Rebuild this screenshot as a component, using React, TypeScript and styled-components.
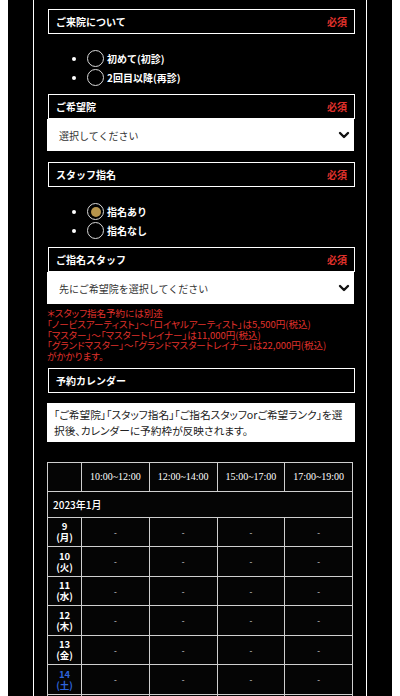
import styled, { createGlobalStyle } from 'styled-components';

const GlobalStyle = createGlobalStyle`
  html, body {
    margin: 0;
    padding: 0;
    background: #ffffff;
  }
  body {
    padding: 0 8px;
    font-family: "Noto Sans CJK JP", "Noto Sans", sans-serif;
    -webkit-font-smoothing: antialiased;
  }
  * {
    box-sizing: border-box;
  }
`;

const StyledPage = styled.div`
  background: #000000;
  padding: 0 25px;
  min-height: 696px;
`;

const StyledFrame = styled.div`
  border-left: 1px solid #ffffff;
  border-right: 1px solid #ffffff;
  padding: 9px 11px 0 13px;
  min-height: 696px;
`;

const StyledHeading = styled.div<{ $gap?: number }>`
  display: flex;
  align-items: center;
  justify-content: space-between;
  height: 25px;
  margin-left: 1px;
  padding: 0 7px;
  border: 1px solid #ffffff;
  background: #000000;
  color: #ffffff;
  font-size: 10px;
  font-weight: 700;
  margin-top: ${({ $gap }) => $gap ?? 0}px;
`;

const StyledRequired = styled.span`
  color: #e0322c;
  font-weight: 700;
`;

const StyledRadioList = styled.ul`
  list-style: none;
  margin: 15px 0 7px;
  padding: 0 0 0 25px;
`;

const StyledRadioItem = styled.li`
  display: flex;
  align-items: center;
  height: 19px;
  color: #ffffff;
  font-size: 10px;
  font-weight: 700;

  &::before {
    content: '';
    width: 4px;
    height: 4px;
    border-radius: 50%;
    background: #ffffff;
    margin-right: 11px;
  }
`;

const StyledRadioLabel = styled.label`
  display: flex;
  align-items: center;
  gap: 3px;
`;

const StyledRadio = styled.input`
  appearance: none;
  margin: 0;
  width: 17px;
  height: 17px;
  border-radius: 50%;
  border: 1.5px solid #d8d8d8;
  background: #000000;
  display: grid;
  place-items: center;

  &:checked::after {
    content: '';
    width: 10px;
    height: 10px;
    border-radius: 50%;
    background: #b7954c;
  }
`;

const StyledSelect = styled.div`
  display: flex;
  align-items: center;
  justify-content: space-between;
  width: 307px;
  height: 32px;
  padding: 0 4px 0 12px;
  background: #ffffff;
  color: #333333;
  font-size: 10px;
`;

const StyledChevron = styled.svg`
  width: 12px;
  height: 12px;
`;

const StyledNote = styled.p`
  margin: 4px 0 0;
  color: #e0322c;
  font-size: 9.5px;
  line-height: 10.8px;
  font-feature-settings: "palt";
`;

const StyledInfo = styled.p`
  margin: 10px 0 0;
  padding: 4px 6px 3px 7px;
  background: #ffffff;
  color: #222222;
  font-size: 10.7px;
  line-height: 16px;
  font-feature-settings: "palt";
`;

const StyledTable = styled.table`
  margin-top: 20px;
  width: 306px;
  border-collapse: collapse;
  table-layout: fixed;
  background: #050505;
  color: #ffffff;

  td, th {
    border: 1px solid #cfcfcf;
    padding: 0;
    text-align: center;
  }
`;

const StyledTimeHead = styled.th`
  height: 29px;
  font-family: "Liberation Serif", "Noto Sans CJK JP", serif;
  font-size: 10px;
  font-weight: 400;
`;

const StyledMonthCell = styled.td`
  height: 26px;
  && {
    text-align: left;
    padding-left: 5px;
  }
  font-size: 10px;
  font-weight: 500;
`;

const StyledDayCell = styled.td<{ $holiday?: boolean }>`
  height: 29.5px;
  font-size: 9.5px;
  font-weight: 700;
  line-height: 11px;
  color: ${({ $holiday }) => ($holiday ? '#2e63d8' : '#ffffff')};
`;

const StyledDayLine = styled.span`
  display: block;
`;

const StyledSlotCell = styled.td`
  font-size: 8px;
  color: #e8e8e8;
`;

const Chevron = () => (
  <StyledChevron viewBox="0 0 12 12">
    <polyline points="2,4 6,8 10,4" fill="none" stroke="#111" strokeWidth="2.4" strokeLinecap="round" strokeLinejoin="round" />
  </StyledChevron>
);

const slots = ['10:00~12:00', '12:00~14:00', '15:00~17:00', '17:00~19:00'];

const days = [
  { day: 9, week: '月' },
  { day: 10, week: '火' },
  { day: 11, week: '水' },
  { day: 12, week: '木' },
  { day: 13, week: '金' },
  { day: 14, week: '土', holiday: true },
  { day: 15, week: '日', holiday: true },
];

export default function App() {
  return (
    <>
      <GlobalStyle />
      <StyledPage>
        <StyledFrame>
          <StyledHeading>
            ご来院について
            <StyledRequired>必須</StyledRequired>
          </StyledHeading>
          <StyledRadioList>
            <StyledRadioItem>
              <StyledRadioLabel>
                <StyledRadio type="radio" name="visit" />
                初めて(初診)
              </StyledRadioLabel>
            </StyledRadioItem>
            <StyledRadioItem>
              <StyledRadioLabel>
                <StyledRadio type="radio" name="visit" />
                2回目以降(再診)
              </StyledRadioLabel>
            </StyledRadioItem>
          </StyledRadioList>

          <StyledHeading>
            ご希望院
            <StyledRequired>必須</StyledRequired>
          </StyledHeading>
          <StyledSelect>
            選択してください
            <Chevron />
          </StyledSelect>

          <StyledHeading $gap={11}>
            スタッフ指名
            <StyledRequired>必須</StyledRequired>
          </StyledHeading>
          <StyledRadioList>
            <StyledRadioItem>
              <StyledRadioLabel>
                <StyledRadio type="radio" name="staff" defaultChecked />
                指名あり
              </StyledRadioLabel>
            </StyledRadioItem>
            <StyledRadioItem>
              <StyledRadioLabel>
                <StyledRadio type="radio" name="staff" />
                指名なし
              </StyledRadioLabel>
            </StyledRadioItem>
          </StyledRadioList>

          <StyledHeading>
            ご指名スタッフ
            <StyledRequired>必須</StyledRequired>
          </StyledHeading>
          <StyledSelect>
            先にご希望院を選択してください
            <Chevron />
          </StyledSelect>

          <StyledNote>
            ＊スタッフ指名予約には別途
            <br />
            「ノービスアーティスト」～「ロイヤルアーティスト」は5,500円(税込)
            <br />
            「マスター」～「マスタートレイナー」は11,000円(税込)
            <br />
            「グランドマスター」～「グランドマスタートレイナー」は22,000円(税込)
            <br />
            がかかります。
          </StyledNote>

          <StyledHeading $gap={6}>予約カレンダー</StyledHeading>
          <StyledInfo>
            「ご希望院」「スタッフ指名」「ご指名スタッフorご希望ランク」を選択後、カレンダーに予約枠が反映されます。
          </StyledInfo>

          <StyledTable>
            <colgroup>
              <col style={{ width: 34 }} />
              <col />
              <col />
              <col />
              <col />
            </colgroup>
            <thead>
              <tr>
                <StyledTimeHead />
                {slots.map((slot) => (
                  <StyledTimeHead key={slot}>{slot}</StyledTimeHead>
                ))}
              </tr>
            </thead>
            <tbody>
              <tr>
                <StyledMonthCell colSpan={5}>2023年1月</StyledMonthCell>
              </tr>
              {days.map((d) => (
                <tr key={d.day}>
                  <StyledDayCell $holiday={d.holiday}>
                    <StyledDayLine>{d.day}</StyledDayLine>
                    <StyledDayLine>({d.week})</StyledDayLine>
                  </StyledDayCell>
                  {slots.map((slot) => (
                    <StyledSlotCell key={slot}>-</StyledSlotCell>
                  ))}
                </tr>
              ))}
            </tbody>
          </StyledTable>
        </StyledFrame>
      </StyledPage>
    </>
  );
}
